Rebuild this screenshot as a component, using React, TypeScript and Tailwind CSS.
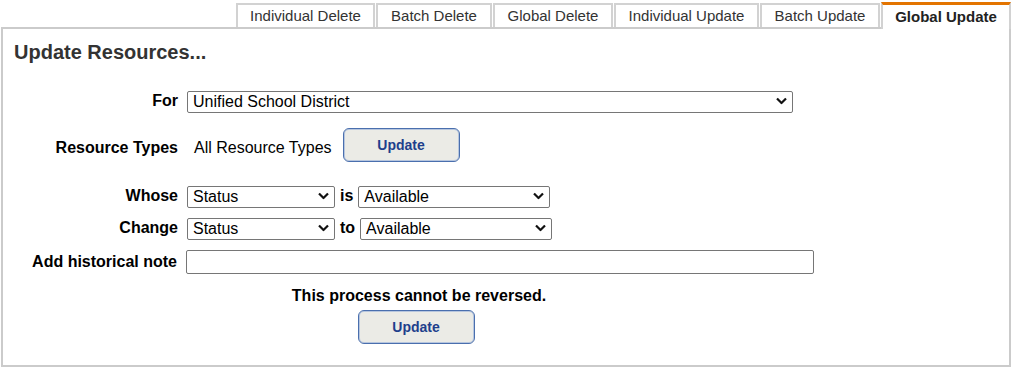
import React from 'react';

const tabs = [
  { label: 'Individual Delete', width: 'w-[139px]' },
  { label: 'Batch Delete', width: 'w-[116px]' },
  { label: 'Global Delete', width: 'w-[120px]' },
  { label: 'Individual Update', width: 'w-[145px]' },
  { label: 'Batch Update', width: 'w-[120px]' },
];

const Chevron = () => (
  <svg
    className="pointer-events-none absolute right-[6px] top-1/2 -translate-y-1/2"
    width="11"
    height="7"
    viewBox="0 0 11 7"
  >
    <polyline points="1,1 5.5,5.5 10,1" fill="none" stroke="#111" strokeWidth="2.2" />
  </svg>
);

const Select = ({ value, width }: { value: string; width: string }) => (
  <div className={`relative h-[22px] ${width}`}>
    <select
      defaultValue={value}
      className="h-full w-full appearance-none rounded-[2px] border border-[#767676] bg-white pl-[5px] text-[16px] leading-[20px] text-black outline-none"
    >
      <option>{value}</option>
    </select>
    <Chevron />
  </div>
);

const UpdateButton = () => (
  <button className="h-[34px] w-[117px] rounded-[6px] border border-[#4a6fae] bg-[#ebebe6] text-[14px] font-bold text-[#1e3f8c] shadow-[inset_0_0_0_1px_#b7c6de]">
    Update
  </button>
);

const Row = ({
  label,
  className,
  labelClass = '',
  children,
}: {
  label: string;
  className: string;
  labelClass?: string;
  children: React.ReactNode;
}) => (
  <div className={`flex items-center ${className}`}>
    <div className={`w-[154px] text-right text-[16px] font-bold leading-[20px] text-black ${labelClass}`}>{label}</div>
    <div className="ml-[9px] flex items-center">{children}</div>
  </div>
);

const App = () => {
  return (
    <div className="h-[370px] w-[1015px] bg-white font-['Liberation_Sans',Arial,sans-serif] text-black">
      <div className="flex h-[27px] items-end justify-end gap-px pr-[4px]">
        {tabs.map((tab) => (
          <div
            key={tab.label}
            className={`${tab.width} flex h-[24px] items-center justify-center border-2 border-b-0 border-[#d2d2d2] bg-white text-[15px] text-[#333]`}
          >
            {tab.label}
          </div>
        ))}
        <div className="relative z-10 -mb-[2px] flex h-[27px] w-[130px] items-center justify-center border-2 border-b-0 border-[#d2d2d2] border-t-[3px] border-t-[#e37400] bg-white text-[15px] font-bold text-[#222]">
          Global Update
        </div>
      </div>

      <div className="ml-px flex h-[340px] w-[1010px] flex-col border-2 border-[#cbcbcb] pl-[11px] pr-[10px] pt-[11px]">
        <h1 className="text-[20px] font-bold leading-[24px] text-[#333]">Update Resources...</h1>

        <div className="ml-[10px] flex w-[790px] flex-col">
          <Row label="For" className="mt-[26px]">
            <Select value="Unified School District" width="w-[606px]" />
          </Row>

          <Row label="Resource Types" className="mt-[16px]" labelClass="pt-[6px]">
            <span className="ml-[7px] pt-[6px] text-[16px] leading-[20px]">All Resource Types</span>
            <div className="ml-[11px]">
              <UpdateButton />
            </div>
          </Row>

          <Row label="Whose" className="mt-[23px]">
            <Select value="Status" width="w-[148px]" />
            <span className="mx-[5px] text-[16px] font-bold leading-[20px]">is</span>
            <Select value="Available" width="w-[192px]" />
          </Row>

          <Row label="Change" className="mt-[10px]">
            <Select value="Status" width="w-[148px]" />
            <span className="mx-[5px] text-[16px] font-bold leading-[20px]">to</span>
            <Select value="Available" width="w-[192px]" />
          </Row>

          <Row label="Add historical note" className="mt-[11px]">
            <input
              type="text"
              className="h-[24px] w-[628px] rounded-[2px] border border-[#767676] bg-white px-[4px] text-[16px] outline-none"
            />
          </Row>

          <p className="mt-[13px] text-center text-[16px] font-bold leading-[18px]">
            This process cannot be reversed.
          </p>
          <div className="mt-[5px] mr-[6px] flex justify-center">
            <UpdateButton />
          </div>
        </div>
      </div>
    </div>
  );
};

export default App;
